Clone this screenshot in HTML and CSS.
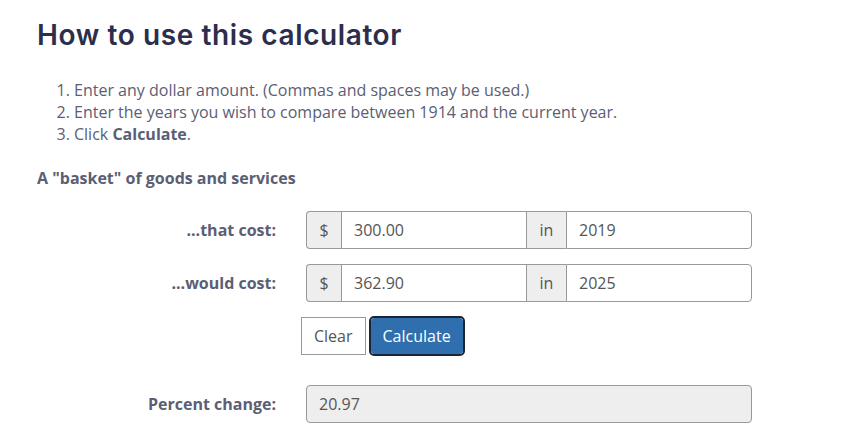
FILE: index.html
```html
<!DOCTYPE html>
<html lang="en">
<head>
    <meta charset="UTF-8">
    <title>How to use this calculator</title>
    <link rel="stylesheet" href="styles.css">
</head>
<body>
    <div class="calc">
        <h2 class="calc-title">How to use this calculator</h2>

        <ol class="steps">
            <li>Enter any dollar amount. (Commas and spaces may be used.)</li>
            <li>Enter the years you wish to compare between 1914 and the current year.</li>
            <li>Click <b>Calculate</b>.</li>
        </ol>

        <p class="basket">A "basket" of goods and services</p>

        <form class="calc-form">
            <label class="form-label">...that cost:</label>
            <div class="input-group">
                <span class="addon addon-first">$</span>
                <input type="text" class="field" value="300.00">
                <span class="addon">in</span>
                <input type="text" class="field field-last" value="2019">
            </div>

            <label class="form-label">...would cost:</label>
            <div class="input-group">
                <span class="addon addon-first">$</span>
                <input type="text" class="field" value="362.90">
                <span class="addon">in</span>
                <input type="text" class="field field-last" value="2025">
            </div>

            <span></span>
            <div class="buttons">
                <input type="reset" class="btn btn-clear" value="Clear">
                <input type="button" class="btn btn-calc" value="Calculate">
            </div>

            <label class="form-label result-label">Percent change:</label>
            <input type="text" class="result" value="20.97" readonly>
        </form>
    </div>
</body>
</html>
```

FILE: styles.css
```css
body {
    margin: 0;
    font-family: "Open Sans", "Liberation Sans", sans-serif;
    color: #5b5e74;
    background: #fff;
}
.calc {
    padding: 0 37px;
}
.calc-title {
    margin: 0;
    padding-top: 16px;
    font-family: "Inter", "Noto Sans", sans-serif;
    font-size: 28px;
    font-weight: 600;
    letter-spacing: 0.6px;
    line-height: 38px;
    color: #2b2e4c;
}
.steps {
    margin: 25px 0 0;
    padding-left: 37px;
    font-size: 16px;
    line-height: 22px;
}
.basket {
    margin: 22px 0 0;
    font-size: 16px;
    font-weight: 700;
    line-height: 22px;
}
.calc-form {
    display: grid;
    grid-template-columns: 239px 446px;
    column-gap: 30px;
    row-gap: 15px;
    align-items: center;
    margin-top: 22px;
}
.form-label {
    text-align: right;
    font-size: 16px;
    font-weight: 700;
}
.input-group {
    display: flex;
    height: 38px;
}
.addon {
    display: flex;
    align-items: center;
    justify-content: center;
    width: 39px;
    background: #eee;
    border: 1px solid #999;
    border-right: none;
    font-size: 16px;
    color: #555;
}
.addon-first {
    width: 34px;
    border-radius: 4px 0 0 4px;
}
.field {
    flex: 1;
    min-width: 0;
    margin: 0;
    padding: 0 12px;
    border: 1px solid #999;
    border-right: none;
    font-family: inherit;
    font-size: 16px;
    color: #555;
}
.field-last {
    border-right: 1px solid #999;
    border-radius: 0 4px 4px 0;
}
.buttons {
    display: flex;
    gap: 4px;
    margin-left: -5px;
}
.btn {
    height: 38px;
    margin: 0;
    padding: 0 12px;
    font-family: inherit;
    font-size: 16px;
    cursor: pointer;
}
.btn-clear {
    background: #fff;
    border: 1px solid #999;
    color: #555;
}
.btn-calc {
    background: #2f6fad;
    border: 1px solid #fff;
    border-radius: 4px;
    outline: 2px solid #1c2536;
    outline-offset: -1px;
    color: #fff;
}
.result-label {
    margin-top: 15px;
}
.result {
    height: 38px;
    box-sizing: border-box;
    margin: 15px 0 0;
    padding: 0 12px;
    background: #eee;
    border: 1px solid #999;
    border-radius: 4px;
    font-family: inherit;
    font-size: 16px;
    color: #555;
}
```
